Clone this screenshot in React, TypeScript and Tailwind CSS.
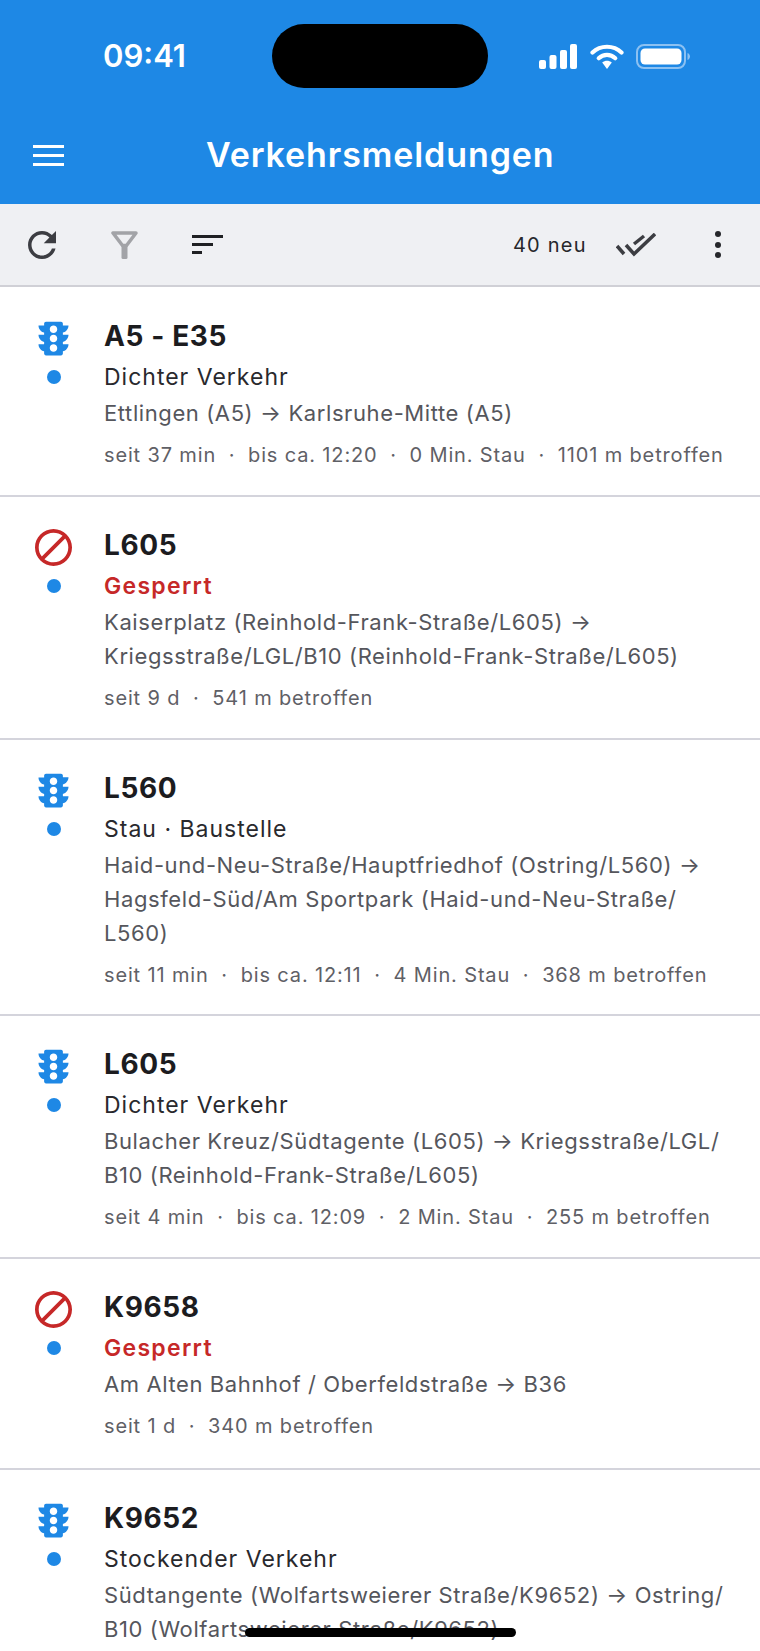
import React from 'react';

type Meldung = {
  kind: 'traffic' | 'block';
  road: string;
  status: string;
  route: string[];
  meta: string[];
  pad: string;
};

const meldungen: Meldung[] = [
  {
    kind: 'traffic',
    road: 'A5 - E35',
    status: 'Dichter Verkehr',
    route: ['Ettlingen (A5) → Karlsruhe-Mitte (A5)'],
    meta: ['seit 37 min', 'bis ca. 12:20', '0 Min. Stau', '1101 m betroffen'],
    pad: 'pb-[26px]',
  },
  {
    kind: 'block',
    road: 'L605',
    status: 'Gesperrt',
    route: ['Kaiserplatz (Reinhold-Frank-Straße/L605) →', 'Kriegsstraße/LGL/B10 (Reinhold-Frank-Straße/L605)'],
    meta: ['seit 9 d', '541 m betroffen'],
    pad: 'pb-[26px]',
  },
  {
    kind: 'traffic',
    road: 'L560',
    status: 'Stau · Baustelle',
    route: ['Haid-und-Neu-Straße/Hauptfriedhof (Ostring/L560) →', 'Hagsfeld-Süd/Am Sportpark (Haid-und-Neu-Straße/', 'L560)'],
    meta: ['seit 11 min', 'bis ca. 12:11', '4 Min. Stau', '368 m betroffen'],
    pad: 'pb-[25px]',
  },
  {
    kind: 'traffic',
    road: 'L605',
    status: 'Dichter Verkehr',
    route: ['Bulacher Kreuz/Südtagente (L605) → Kriegsstraße/LGL/', 'B10 (Reinhold-Frank-Straße/L605)'],
    meta: ['seit 4 min', 'bis ca. 12:09', '2 Min. Stau', '255 m betroffen'],
    pad: 'pb-[26px]',
  },
  {
    kind: 'block',
    road: 'K9658',
    status: 'Gesperrt',
    route: ['Am Alten Bahnhof / Oberfeldstraße → B36'],
    meta: ['seit 1 d', '340 m betroffen'],
    pad: 'pb-[28px]',
  },
  {
    kind: 'traffic',
    road: 'K9652',
    status: 'Stockender Verkehr',
    route: ['Südtangente (Wolfartsweierer Straße/K9652) → Ostring/', 'B10 (Wolfartsweierer Straße/K9652)'],
    meta: [],
    pad: 'pb-[26px]',
  },
];

const TrafficIcon = () => (
  <svg viewBox="0 0 24 24" className="w-[45px] h-[45px] fill-[#1e88e5]">
    <path d="M20 10h-3V8.86c1.72-.45 3-2 3-3.86h-3V4c0-.55-.45-1-1-1H8c-.55 0-1 .45-1 1v1H4c0 1.86 1.28 3.41 3 3.86V10H4c0 1.86 1.28 3.41 3 3.86V15H4c0 1.86 1.28 3.41 3 3.86V20c0 .55.45 1 1 1h8c.55 0 1-.45 1-1v-1.14c1.72-.45 3-2 3-3.86h-3v-1.14c1.72-.45 3-2 3-3.86zm-8 9c-1.11 0-2-.9-2-2s.89-2 2-2c1.1 0 2 .9 2 2s-.89 2-2 2zm0-5c-1.11 0-2-.9-2-2s.89-2 2-2c1.1 0 2 .9 2 2s-.89 2-2 2zm0-5c-1.11 0-2-.9-2-2 0-1.11.89-2 2-2 1.1 0 2 .89 2 2 0 1.1-.89 2-2 2z" />
  </svg>
);

const BlockIcon = () => (
  <svg viewBox="2 2 20 20" className="w-[37px] h-[37px] m-[4px] fill-[#c62828]">
    <path d="M12 2C6.48 2 2 6.48 2 12s4.48 10 10 10 10-4.48 10-10S17.52 2 12 2zM4 12c0-4.42 3.58-8 8-8 1.85 0 3.55.63 4.9 1.69L5.69 16.9C4.63 15.55 4 13.85 4 12zm8 8c-1.85 0-3.55-.63-4.9-1.69L18.31 7.1C19.37 8.45 20 10.15 20 12c0 4.42-3.58 8-8 8z" />
  </svg>
);

const StatusIcons = () => (
  <div className="flex items-center">
    <svg viewBox="0 0 38 25" className="w-[38px] h-[25px] fill-white">
      <rect x="0" y="16" width="7" height="9" rx="2" />
      <rect x="10.5" y="11" width="7" height="14" rx="2" />
      <rect x="21" y="6" width="7" height="19" rx="2" />
      <rect x="31" y="0" width="7" height="25" rx="2" />
    </svg>
    <svg viewBox="0 0 34 25" className="ml-[13px] w-[34px] h-[25px]">
      <path d="M2.5 8.5C10.5 .8 23.5 .8 31.5 8.5" fill="none" stroke="#fff" strokeWidth="4.2" strokeLinecap="round" />
      <path d="M8.7 14.2C13.5 9.8 20.5 9.8 25.3 14.2" fill="none" stroke="#fff" strokeWidth="4.2" strokeLinecap="round" />
      <path d="M12.2 18.4c2.8-2.3 6.8-2.3 9.6 0L17 25z" fill="#fff" />
    </svg>
    <svg viewBox="0 0 54 25" className="ml-[12px] w-[54px] h-[25px]">
      <rect x="1" y="1" width="48" height="23" rx="7" fill="none" stroke="#8cc1f2" strokeWidth="2" />
      <rect x="4.5" y="4.5" width="41" height="16" rx="4.5" fill="#fff" />
      <path d="M51.5 9c1.6.6 2.5 2 2.5 3.5s-.9 2.900-2.500 3.500z" fill="#8cc1f2" />
    </svg>
  </div>
);

const MeldungRow = ({ m, last }: { m: Meldung; last: boolean }) => (
  <div className={`flex pl-[32px] pr-[20px] pt-[28px] ${m.pad} ${last ? '' : 'border-b-2 border-[#d4d4dc]'}`}>
    <div className="w-[44px] shrink-0 flex flex-col items-center">
      <div className="w-[45px] h-[45px] shrink-0 -ml-[2px]">{m.kind === 'traffic' ? <TrafficIcon /> : <BlockIcon />}</div>
      <div className="mt-[9px] w-[14px] h-[14px] rounded-full bg-[#1e88e5]" />
    </div>
    <div className="ml-[28px] min-w-0 flex-1 pt-[3px]">
      <div className="text-[28px] leading-[34px] font-bold tracking-[0.6px] text-[#1c1c1f]">{m.road}</div>
      <div
        className={`mt-[7px] text-[23px] leading-[34px] ${
          m.kind === 'block' ? 'font-semibold tracking-[1.3px] text-[#c62828]' : 'tracking-[1px] text-[#29292d]'
        }`}
      >
        {m.status}
      </div>
      <div className="mt-[2px] text-[22px] leading-[34px] tracking-[0.6px] text-[#55565c] whitespace-nowrap">
        {m.route.map((line) => (
          <div key={line}>{line}</div>
        ))}
      </div>
      {m.meta.length > 0 && (
        <div className="mt-[11px] flex text-[20px] leading-[28px] tracking-[0.85px] text-[#5f6066] whitespace-nowrap">
          {m.meta.map((part, i) => (
            <span key={part} className="flex">
              {i > 0 && <span className="w-[32px] text-center">·</span>}
              {part}
            </span>
          ))}
        </div>
      )}
    </div>
  </div>
);

export default function App() {
  return (
    <div className="relative h-[1651px] w-[760px] overflow-hidden bg-white font-['Inter','Noto_Sans',sans-serif]">
      <header className="h-[204px] bg-[#1e88e5] text-white">
        <div className="flex pt-[24px] h-[88px]">
          <div className="w-[272px] pl-[103px] text-[31px] leading-[64px] font-semibold">09:41</div>
          <div className="w-[216px] h-[64px] rounded-full bg-black" />
          <div className="ml-[51px] h-[64px] flex items-center">
            <StatusIcons />
          </div>
        </div>
        <div className="flex items-center h-[58px] mt-[38px] pl-[33px]">
          <div className="flex flex-col gap-[6px] w-[31px]">
            <div className="h-[3px] bg-white" />
            <div className="h-[3px] bg-white" />
            <div className="h-[3px] bg-white" />
          </div>
          <div className="ml-[142px] text-[34px] leading-[58px] font-semibold tracking-[0.9px] whitespace-nowrap">
            Verkehrsmeldungen
          </div>
        </div>
      </header>

      <div className="flex items-center h-[83px] bg-[#eff0f3] border-b-2 border-[#d0d0d6]">
        <svg viewBox="0 0 24 24" className="ml-[21px] w-[42px] h-[42px] fill-[#3c3d42]">
          <path d="M17.65 6.35C16.2 4.9 14.21 4 12 4c-4.42 0-7.99 3.58-7.99 8s3.57 8 7.99 8c3.73 0 6.84-2.55 7.73-6h-2.08c-.82 2.33-3.04 4-5.65 4-3.31 0-6-2.69-6-6s2.69-6 6-6c1.66 0 3.14.69 4.22 1.78L13 11h7V4l-2.35 2.35z" />
        </svg>
        <svg viewBox="0 0 27 28" className="ml-[48px] w-[27px] h-[28px]">
          <path d="M2 2h23L15.500 14.500h-4z" fill="none" stroke="#a2a3a7" strokeWidth="3.500" strokeLinejoin="round" />
          <rect x="10.500" y="13" width="6" height="15" rx="1.500" fill="#a2a3a7" />
        </svg>
        <div className="ml-[54px] w-[31px] flex flex-col gap-[4.500px]">
          <div className="h-[3.500px] w-[31px] bg-[#1f2023]" />
          <div className="h-[3.500px] w-[21px] bg-[#1f2023]" />
          <div className="h-[3.500px] w-[10px] bg-[#1f2023]" />
        </div>
        <div className="ml-[290px] text-[20px] tracking-[1.2px] text-[#26272b] whitespace-nowrap">40 neu</div>
        <svg viewBox="0 0 40 24" className="ml-[29px] w-[40px] h-[24px]" fill="none" stroke="#3c3d42" strokeWidth="3.500">
          <path d="M1 13l7 8" />
          <path d="M10 12l8 9L39 1" />
          <path d="M18 11L28 3" />
        </svg>
        <div className="ml-[59px] flex flex-col gap-[4.500px]">
          <div className="w-[6px] h-[6px] rounded-full bg-[#26272b]" />
          <div className="w-[6px] h-[6px] rounded-full bg-[#26272b]" />
          <div className="w-[6px] h-[6px] rounded-full bg-[#26272b]" />
        </div>
      </div>

      <main className="pt-[1px]">
        {meldungen.map((m, i) => (
          <MeldungRow key={i} m={m} last={i === meldungen.length - 1} />
        ))}
      </main>

      <div className="absolute left-[245px] top-[1628px] w-[271px] h-[9px] rounded-full bg-black" />
    </div>
  );
}
